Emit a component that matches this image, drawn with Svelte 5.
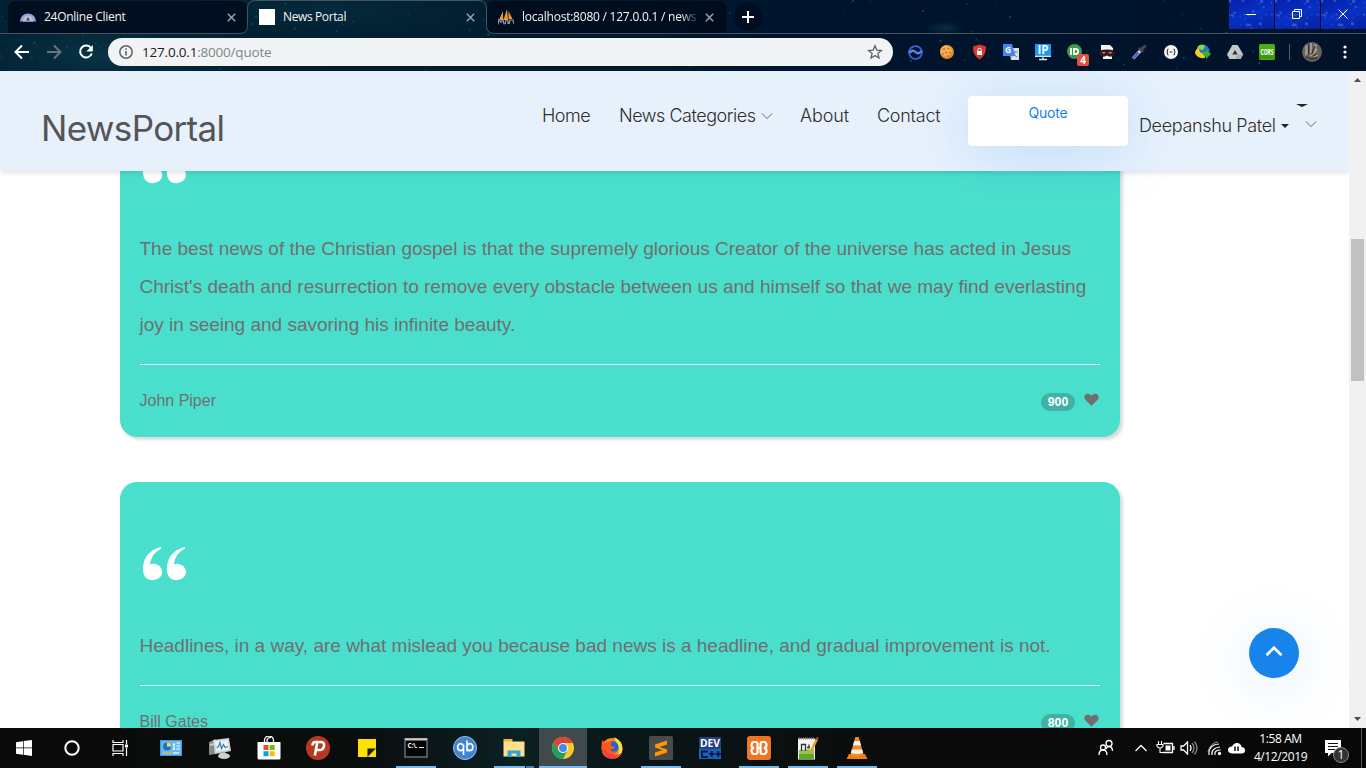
<script>
  const quotes = [
    {
      lines: [
        'The best news of the Christian gospel is that the supremely glorious Creator of the universe has acted in Jesus',
        "Christ's death and resurrection to remove every obstacle between us and himself so that we may find everlasting",
        'joy in seeing and savoring his infinite beauty.'
      ],
      author: 'John Piper',
      likes: 900
    },
    {
      lines: ['Headlines, in a way, are what mislead you because bad news is a headline, and gradual improvement is not.'],
      author: 'Bill Gates',
      likes: 800
    }
  ];
  const extensions = ['wave', 'cookie', 'shield', 'translate', 'ip', 'pushbullet', 'mask', 'dropper', 'json', 'idm', 'drive', 'cors'];
  const apps = [
    ['control'], ['monitor'], ['store'], ['psiphon'], ['sticky'], ['cmd', 'run'], ['qb'], ['explorer', 'multi'],
    ['chrome', 'active'], ['firefox'], ['sublime', 'run'], ['dev'], ['xampp', 'run'], ['notepad', 'run'], ['vlc', 'run']
  ];
  const quoteMark = 'M17.500 0L18.400 1.500Q8.500 6 7 17.300A9.300 8.200 0 1110 33.300Q0 33 0 21.500 .5 5 17.500 0z';
  let seed = 7;
  const rnd = () => (seed = (seed * 16807) % 2147483647) / 2147483647;
  const stars = Array.from({ length: 170 }, () => {
    const x = rnd();
    return { x: (rnd() > 0.5 ? x * 1366 : x * x * 500).toFixed(1), y: (rnd() * 71).toFixed(1), r: (0.4 + rnd() * 0.8).toFixed(2), o: (0.06 + rnd() * 0.2).toFixed(2) };
  });
  const sparks = Array.from({ length: 60 }, () => ({ x: (rnd() * 137).toFixed(1), y: (rnd() * 29).toFixed(1), r: (0.5 + rnd() * 1.3).toFixed(2), o: (0.12 + rnd() * 0.35).toFixed(2) }));
</script>

{#snippet cross()}
  <svg class="cross" width="9" height="9" viewBox="0 0 9 9"><path d="M.8.8l7.4 7.4M8.2.8L.8 8.2" stroke="#9aa3ad" stroke-width="1.500" fill="none" /></svg>
{/snippet}

{#snippet extIcon(name)}
  <svg width="18" height="18" viewBox="0 0 18 18">
    {#if name === 'wave'}
      <circle cx="9.500" cy="9.500" r="6.400" fill="none" stroke="#3c63d0" stroke-width="1.800" />
      <path d="M3.500 10q3-4 6-1t6-1" fill="none" stroke="#5c82e8" stroke-width="2.400" />
    {:else if name === 'cookie'}
      <circle cx="9" cy="9" r="7" fill="#e0892c" />
      <circle cx="8" cy="8" r="5.800" fill="#f3ad55" />
      <g fill="#9a5720"><circle cx="6" cy="6" r=".8" /><circle cx="10.500" cy="5.500" r=".8" /><circle cx="8" cy="9.500" r=".8" /><circle cx="12" cy="9.500" r=".8" /><circle cx="5" cy="11" r=".8" /><circle cx="10" cy="13" r=".8" /></g>
    {:else if name === 'shield'}
      <path d="M9.500 1.500l6.500 2q.3 9-6.500 13Q2.700 12.500 3 3.500z" fill="#d9382c" />
      <rect x="7" y="8" width="5" height="4" fill="#fff" /><path d="M7.900 8V6.700a1.600 1.600 0 013.200 0V8" fill="none" stroke="#fff" />
    {:else if name === 'translate'}
      <path d="M7 5h10v12H9z" fill="#dcdfe2" /><path d="M10 9h6M13 8v1q-.5 3-3.500 5M11 10q1 3 4.500 4" stroke="#7b8794" fill="none" />
      <path d="M1 1h9l3.500 12H1z" fill="#4285f4" /><text x="3" y="10" font-size="8.500" font-weight="700" fill="#fff">G</text>
    {:else if name === 'ip'}
      <rect x="1" y="1" width="16" height="12" fill="#1b98ef" /><path d="M1 13.400h16M9 13.500v3M5 16.500h8" stroke="#d5e6f2" stroke-width="1.300" />
      <text x="3.500" y="11" font-size="11.500" font-weight="700" fill="#fff" textLength="11">IP</text>
    {:else if name === 'pushbullet'}
      <circle cx="8.500" cy="8.500" r="7.500" fill="#3e9b4c" /><path d="M5 5v7M8 5.800v5.400h1.500a2.700 2.700 0 000-5.400z" stroke="#fff" stroke-width="1.800" fill="none" />
    {:else if name === 'mask'}
      <path d="M4 2h8l3 3v5H3V2zM5 12h9v4H5z" fill="#f4f4f4" /><path d="M1.500 7.500Q9 5.500 16.500 7.500V12q-4 3-7.500.500Q5.500 15 1.500 12z" fill="#35191b" />
      <ellipse cx="5.800" cy="9.800" rx="1.800" ry=".8" fill="#c09a92" /><ellipse cx="12.200" cy="9.800" rx="1.800" ry=".8" fill="#c09a92" />
    {:else if name === 'dropper'}
      <path d="M3 15.500l8.500-9" stroke="#c8d6e8" stroke-width="3.200" /><path d="M3 15.500l5.500-6" stroke="#3460c8" stroke-width="2" /><path d="M9 5l4 4M11 7l4.500-4.500" stroke="#4a464c" stroke-width="3" />
    {:else if name === 'json'}
      <circle cx="9" cy="9" r="7" fill="#f5f5f5" /><path d="M6.500 6Q5.500 6 5.500 7.500T4.500 9q1 0 1 1.500t1 1.500M11.500 6q1 0 1 1.500t1 1.500q-1 0-1 1.500t-1 1.500M7.500 9h3" stroke="#333" stroke-width="1.100" fill="none" />
    {:else if name === 'idm'}
      <circle cx="9" cy="8" r="6.500" fill="#2476c9" /><path d="M4 3q4-3 7 0l-2 4-6-1z" fill="#8fd34c" /><path d="M1 10q1-5 4-4 0 4 5 5l1 4Q3 16 1 10z" fill="#f6cd20" /><path d="M8 9h4V6.500l5 4.500-5 5v-3q-3 0-4-4z" fill="#37b32a" />
    {:else if name === 'drive'}
      <path d="M6.300 2h5.400l5.500 9.500-2.700 4.500h-11L1 11.500z" fill="#c5c7c9" /><path d="M9 7l2.700 4.500H6.300z" fill="#26323d" /><path d="M12 11.500h5l-2.500 4.500h-5z" fill="#a9abae" />
    {:else if name === 'cors'}
      <rect x="1" y="1" width="16" height="16" rx="1.500" fill="#4cae17" /><path d="M1 10h16v6H1z" fill="#3d980f" />
      <text x="2.500" y="12" font-size="8" font-weight="700" fill="#fff" textLength="13" lengthAdjust="spacingAndGlyphs">CORS</text>
    {/if}
  </svg>
{/snippet}

{#snippet appIcon(name)}
  <svg width="24" height="24" viewBox="0 0 24 24">
    {#if name === 'control'}
      <rect x="1.500" y="4.500" width="21" height="15" rx=".5" fill="#65b9ee" /><rect x="1.500" y="4.500" width="21" height="15" fill="none" stroke="#3c9ade" />
      <circle cx="8" cy="10.500" r="4" fill="#1874c7" /><path d="M8 10.500V6.500a4 4 0 014 4z" fill="#ffd93f" /><path d="M14 8.500h2M14 13h2M17.500 7h3.500M17.500 10h3.500M17.500 13h3.500M15 7v7" stroke="#fff" stroke-width="1.100" />
      <path d="M4 17h8" stroke="#ffaa2b" stroke-width="1.500" /><path d="M14 17h6" stroke="#d9f0ff" stroke-width="1.500" />
    {:else if name === 'monitor'}
      <path d="M1 6l7-3v15l-7 1z" fill="#858c88" /><path d="M2 8l4-1v2l-4 1z" fill="#c9cec9" /><path d="M5 4l16-2 2 13-16 3z" fill="#d3d6d4" /><path d="M7 5.500l12.500-1.500 1.500 9.500-12.500 2z" fill="#eaf3f7" /><path d="M8.500 11.500l2-1 1.500-4 1.500 6 2-4 1.500 3 3-1" fill="none" stroke="#2a83b8" stroke-width="1.200" /><path d="M11 16.500l6-1 1 4h-6z" fill="#abb0ae" /><ellipse cx="16" cy="20" rx="6" ry="3" fill="#cdd0ce" />
    {:else if name === 'store'}
      <path d="M.5 6h23v16q0 1.500-1.500 1.500H2Q.5 23.500.5 22z" fill="#fff" /><path d="M7.500 6V4.500a4.500 4.500 0 019 0V6M10 6V4q1.500-3 4-2.500" fill="none" stroke="#fff" stroke-width="1.300" />
      <path d="M6.500 9h5v5h-5z" fill="#e84e25" /><path d="M12.700 9h5v5h-5z" fill="#7cb800" /><path d="M6.500 15.200h5v5h-5z" fill="#00a2e8" /><path d="M12.700 15.200h5v5h-5z" fill="#fdb813" />
    {:else if name === 'psiphon'}
      <circle cx="12" cy="12" r="12" fill="#b73a20" /><path d="M6.500 9.500Q6.500 6 9.500 6h5q4 0 3.500 3.800-.6 4.200-4.500 4.200H9.700M11.300 6.500L8.800 19.500" fill="none" stroke="#fff" stroke-width="2.600" />
    {:else if name === 'sticky'}
      <path d="M3 3h18v9.500L12.500 21H3z" fill="#ffe100" /><path d="M12.500 12.500H21L12.500 21z" fill="#1b1b12" /><path d="M12.500 21L21 12.500V21z" fill="#ffe100" />
    {:else if name === 'cmd'}
      <rect x="1" y="2.500" width="22" height="18.500" fill="#050505" stroke="#9a9d9e" /><path d="M1 3.500h22" stroke="#c7cacb" stroke-width="2" /><text x="3.500" y="11.500" font-size="6.500" font-weight="700" fill="#fff" textLength="10">C:\.</text><path d="M15 11.500h5" stroke="#fff" />
    {:else if name === 'qb'}
      <circle cx="12" cy="12" r="11.500" fill="#4285cf" stroke="#96c1ef" /><path d="M10.500 8.500v10.500M10.500 12a3 3.500 0 10-5.800 0a3 3.500 0 005.800 0M14 4.500v11M14 12a3 3.500 0 115.800 0a3 3.500 0 01-5.800 0" fill="none" stroke="#fff" stroke-width="1.600" />
    {:else if name === 'explorer'}
      <path d="M1.500 3h9v3h-9z" fill="#f2b51e" /><path d="M1.500 5.500h21v15h-21z" fill="#ffe08c" /><path d="M5.500 21v-6.500h13V21h-4v-3.500h-5V21z" fill="#2ba8e0" />
    {:else if name === 'chrome'}
      <circle cx="12" cy="12" r="11" fill="#fbc92b" /><path d="M12 12V7h9.800Q19.500 1 12 1A11 11 0 002.470 6.500L7.700 14.500z" fill="#da4336" /><path d="M2.470 6.500A11 11 0 0012 23L16.300 14.500Q12 19 7.700 14.500z" fill="#1fa15d" />
      <circle cx="12" cy="12" r="5" fill="#fff" /><circle cx="12" cy="12" r="4" fill="#4688f1" />
    {:else if name === 'firefox'}
      <circle cx="12" cy="12.500" r="10.500" fill="#ff8a16" /><path d="M14 1q9 4 8.500 12-.5 7-7 9.500Q21 15 18 10q-2-4-4-9z" fill="#ffdf3c" /><circle cx="12.500" cy="11" r="6" fill="#2065d4" /><path d="M2 4l3 3q4-3 7-1-2 2-1 4l4 1q-2 3-5 2.500 2 3.500 7 1.500-3 6-9 4.500Q1 17 1.500 10z" fill="#ff5a1f" /><path d="M1.500 12Q3 22 12 23q7-.5 9.500-6-9 5-16-3z" fill="#f2403d" />
    {:else if name === 'sublime'}
      <rect width="24" height="24" rx="1.500" fill="#494a4b" /><path d="M18 4.500v4L10.500 11 18 13.500v3L6 20.500v-4l7.500-2.500L6 11.500v-3z" fill="#ff9800" />
    {:else if name === 'dev'}
      <path d="M1 1h22v22H1z" fill="#24407f" /><path d="M1 13h22v10H1z" fill="#1a62b8" /><text x="2" y="11" font-size="11" font-weight="700" fill="#fff" textLength="20" lengthAdjust="spacingAndGlyphs">DEV</text><path d="M10 15.500H4v5.500h6M11 18h5.500M13.700 15.300v5.500M17.500 18H23M20.200 15.300v5.500" fill="none" stroke="#071a4b" stroke-width="2" />
    {:else if name === 'xampp'}
      <rect width="24" height="24" rx="3" fill="#ef7522" /><path d="M7.300 6H8.500Q10.500 6 10.500 8v8q0 2-2 2H7.300q-2.800 0-2.800-3T7.300 12q-2.800 0-2.800-3t2.800-3zM16.700 6H15.500Q13.500 6 13.500 8v8q0 2 2 2h1.200q2.800 0 2.800-3t-2.800-3q2.800 0 2.800-3t-2.800-3zM10.500 12h3" fill="none" stroke="#fff" stroke-width="2.200" />
    {:else if name === 'notepad'}
      <path d="M2 2.500h17v21H2z" fill="#f4f5f0" /><path d="M3 14l15-1v10H3z" fill="#8ec64c" /><path d="M3 18h15v5H3z" fill="#5fa928" /><path d="M3 2.500h16" stroke="#8a8a8a" stroke-width="2" stroke-dasharray="1 1" /><path d="M5.500 15V8.500h4V15M11 11.500h3M13 8.500v4" stroke="#333" stroke-width="1.300" fill="none" /><path d="M14 17l7-14" stroke="#e7a625" stroke-width="2.500" /><path d="M20.500 4l1.200-2.500" stroke="#b74532" stroke-width="2.500" />
    {:else if name === 'vlc'}
      <path d="M4 18h16l2.500 5h-21z" fill="#f47b0c" /><path d="M10.300 1h3.400l5 18q-6.700 3-13.400 0z" fill="#f58b20" /><path d="M9.200 5h5.600l1.300 4.500H7.900zM6.800 13.500h10.400l1 3.500q-6.200 2-12.400 0z" fill="#eef1f2" />
    {/if}
  </svg>
{/snippet}

<div class="screen">
  <div class="browser">
    <svg class="sky" width="1366" height="71" viewBox="0 0 1366 71">
      <defs>
        <radialGradient id="neb"><stop offset="0" stop-color="#0b3c4e" stop-opacity=".7" /><stop offset="1" stop-color="#082b40" stop-opacity="0" /></radialGradient>
      </defs>
      <ellipse cx="100" cy="55" rx="180" ry="50" fill="url(#neb)" /><ellipse cx="330" cy="10" rx="240" ry="45" fill="url(#neb)" opacity=".6" /><ellipse cx="945" cy="28" rx="22" ry="8" fill="url(#neb)" />
      {#each stars as s}<circle cx={s.x} cy={s.y} r={s.r} fill="#7fc3d8" opacity={s.o} />{/each}
      <path d="M8 33V8Q8 1 16 1H239Q247 1 247 8V26Q247 33 240 33zM487 8Q487 1 495 1H718Q726 1 726 9V33H494Q487 33 487 26z" fill="#000b1d" opacity=".88" />
      <path d="M0 33.500H239.500Q247.500 33.500 247.500 25.500V8.500Q247.500 .500 255.500 .500H478.500Q486.500 .500 486.500 8.500V25.500Q486.500 33.500 494.500 33.500H1366" fill="none" stroke="#46545f" />
    </svg>
    <div class="tabs">
      <div class="tab">
        <svg width="16" height="16" viewBox="0 0 16 16"><path d="M0 12.500A8 8 0 0116 12.500z" fill="#93a5d4" /><path d="M3 12.500q0-6 5-6t5 6" fill="#b3bfdf" /><path d="M6 11.500L8 8l2 3.500z" fill="#37476f" /></svg>
        <span class="title t1">24Online Client</span>{@render cross()}
      </div>
      <div class="tab">
        <i class="blank"></i><span class="title t2">News Portal</span>{@render cross()}
      </div>
      <div class="tab">
        <svg width="16" height="16" viewBox="0 0 16 16"><path d="M1 11L5 2v9zM5.500 11L9 0l1 11zM10.500 10V2l4 8z" fill="#f39a25" /><path d="M0 15.500l1-5 2 3 2-3 1 5M7 15l1-4h2v4M11 15l1-4h3l1 4" fill="none" stroke="#9197b9" stroke-width="1.200" /></svg>
        <span class="title t3">localhost:8080 / 127.0.0.1 / newsp</span>{@render cross()}
      </div>
      <div class="plus"><svg width="12" height="12" viewBox="0 0 12 12"><path d="M6 0v12M0 6h12" stroke="#fff" stroke-width="2" /></svg></div>
      <div class="controls">
        {#each ['M0 5.500h10', 'M.5 2.500h7v7h-7zM2.500 2.500v-2h7v7h-2', 'M.5.500l9 9M9.500.500l-9 9'] as d}
          <div class="ctl">
            <svg class="dots" width="45" height="29" viewBox="0 0 45 29">{#each sparks.slice(0, 34) as p}<circle cx={p.x % 45} cy={p.y} r={p.r} fill="#6f9dff" opacity={p.o} />{/each}</svg>
            <svg width="10" height="10" viewBox="0 0 10 10"><path {d} stroke="#fff" fill="none" /></svg>
          </div>
        {/each}
      </div>
    </div>
    <div class="toolbar">
      <svg class="nav-icons" width="108" height="36" viewBox="0 0 108 36">
        <path d="M29 18H16M22 11.500L15.500 18l6.500 6.500" fill="none" stroke="#fff" stroke-width="2" />
        <path d="M47 18h13M54 11.500l6.500 6.500-6.500 6.500" fill="none" stroke="#66747f" stroke-width="2" />
        <path d="M91 14a6 6 0 10.800 5.500" fill="none" stroke="#fff" stroke-width="2" /><path d="M92.800 11v6.500h-6.500z" fill="#fff" />
      </svg>
      <div class="omnibox">
        <svg width="14" height="14" viewBox="0 0 14 14"><circle cx="7" cy="7" r="6.200" fill="none" stroke="#5f6368" stroke-width="1.500" /><path d="M7 6v4.500M7 3.300v1.500" stroke="#5f6368" stroke-width="1.600" /></svg>
        <span class="url"><b>127.0.0.1</b>:8000/quote</span>
        <svg width="16" height="16" viewBox="0 0 16 16"><path d="M8 1.800l1.800 4.300 4.600.4-3.500 3 1.100 4.500L8 11.600 4 14l1.100-4.500-3.500-3 4.600-.4z" fill="none" stroke="#5f6368" stroke-width="1.300" /></svg>
      </div>
      <div class="exts">
        {#each extensions as e}
          <div class="ext">{@render extIcon(e)}{#if e === 'pushbullet'}<span class="count">4</span>{/if}</div>
        {/each}
      </div>
      <i class="sep"></i>
      <svg class="avatar" width="20" height="20" viewBox="0 0 20 20"><circle cx="10" cy="10" r="10" fill="#66615b" /><path d="M3 4l3-2v10l-3 2zM8 1h2v9l-2 2zM12 2l3 1-1 6-3 3z" fill="#9d968e" /><path d="M13 4l-3 8 5 2M4 15l5 2 6-1M6.500 2v10" stroke="#35312e" fill="none" stroke-width="1.300" /><path d="M8 14q5-2 7-7M12 15l4-2" stroke="#c0b9ad" fill="none" /></svg>
      <svg width="4" height="16" viewBox="0 0 4 16"><circle cx="2" cy="3" r="1.600" fill="#fff" /><circle cx="2" cy="8" r="1.600" fill="#fff" /><circle cx="2" cy="13" r="1.600" fill="#fff" /></svg>
    </div>
  </div>

  <div class="viewport">
    <div class="page">
      <header>
        <div class="brand">NewsPortal</div>
        <nav>
          <span class="home">Home</span>
          <span class="cats"><span>News Categories</span><svg width="12" height="8" viewBox="0 0 12 8"><path d="M1 1.500l5 5 5-5" fill="none" stroke="#555" stroke-width=".9" /></svg></span>
          <span class="about">About</span>
          <span class="contact">Contact</span>
          <div class="quote-btn">Quote</div>
          <span class="user"><span>Deepanshu Patel</span><i class="caret"></i></span>
          <div class="more"><i></i><svg width="12" height="8" viewBox="0 0 12 8"><path d="M1 1.500l5 5 5-5" fill="none" stroke="#555" stroke-width=".9" /></svg></div>
        </nav>
      </header>
      <main>
        {#each quotes as q}
          <article>
            <svg class="mark" width="44" height="34" viewBox="0 0 44 34"><path d={quoteMark} fill="#fff" /><path transform="translate(23.800)" d={quoteMark} fill="#fff" /></svg>
            <div class="text">{#each q.lines as line}<div>{line}</div>{/each}</div>
            <footer>
              <span class="author">{q.author}</span>
              <span class="badge">{q.likes}</span>
              <svg class="heart" width="15" height="13" viewBox="0 0 15 13"><path d="M7.500 12.700L1.200 6.600C-1.500 3 2.500-2 7.500 2.300 12.500-2 16.500 3 13.800 6.600z" fill="#6f6f6f" /></svg>
            </footer>
          </article>
        {/each}
      </main>
      <div class="top-btn"><svg width="18" height="11" viewBox="0 0 18 11"><path d="M1.500 9.200L9 1.700l7.500 7.500" fill="none" stroke="#fff" stroke-width="2.700" /></svg></div>
    </div>
    <div class="scrollbar">
      <svg width="7" height="4" viewBox="0 0 7 4"><path d="M0 4L3.500 0 7 4z" fill="#505050" /></svg>
      <i class="thumb"></i>
      <svg class="down" width="7" height="4" viewBox="0 0 7 4"><path d="M0 0h7L3.500 4z" fill="#505050" /></svg>
    </div>
  </div>

  <div class="taskbar">
    <div class="sys"><svg width="16" height="16" viewBox="0 0 16 16"><path d="M0 2.200l7-1V7.500H0zM7.700 1.100L16 0v7.500H7.700zM0 8.300h7v6.500l-7-1zM7.700 8.300H16V16l-8.300-1.200z" fill="#fff" /></svg></div>
    <div class="sys"><svg width="16" height="16" viewBox="0 0 16 16"><circle cx="8" cy="8" r="6.700" fill="none" stroke="#fff" stroke-width="2" /></svg></div>
    <div class="sys"><svg width="17" height="16" viewBox="0 0 17 16"><path d="M1 0v2.500h10V0M1 16v-2.500h10V16M1 4.500h10v6.500H1zM14.500 0v4M14.500 8v8" fill="none" stroke="#fff" stroke-width="1.200" /><path d="M13 4.500h3v3h-3z" fill="#fff" /></svg></div>
    <div class="apps">
      {#each apps as [name, state]}<div class="app {state ?? ''}">{@render appIcon(name)}</div>{/each}
    </div>
    <div class="tray">
      <svg width="180" height="40" viewBox="-21 0 180 40" fill="none" stroke="#fff" stroke-width="1.300">
        <circle cx="23" cy="15.500" r="3" /><path d="M20 21q1-2.500 3-2.500 3.500 0 3.500 4.500" /><circle cx="17" cy="19.500" r="2.500" /><path d="M13 27q0-5 4-5t4 5" />
        <path d="M49.500 23l5.500-5.500L60.500 23" />
        <path d="M77.500 15.500h9v9h-10M88 18v4" /><path d="M79.500 17.500h5v5h-5z" fill="#fff" stroke="none" /><path d="M72.500 13v3M75.500 13v3M71 16.500h6v1.500q-1 2-3 2t-3-2zM74 20v4.500h3" stroke-width="1.100" />
        <path d="M95 18h2.500l4-4v12l-4-4H95z" /><path d="M104 17q2 3 0 6" /><path d="M106 15q4 5 0 10M108.500 13.500q5 6.500 0 13" stroke="#878787" />
        <path d="M123 27q-1-10 10-11M126 27q-1-7 8-8M129 27q-1-5 5.500-5" stroke-width="1.200" /><path d="M122 24q2-9 10-10" stroke="#999" stroke-width="1" /><circle cx="133.500" cy="25.500" r="1.700" fill="#fff" stroke="none" />
        <path d="M146 25.500q-4-.5-4-3.500 0-3.500 4-3.500 2-4 5.500-3.500 3.500.5 4 4 3.500 0 3.500 3.500 0 3-3.500 3z" fill="#fff" stroke="none" /><path d="M149 18.500v4.500M152 18.500v4.500" stroke="#111" stroke-width="1.500" />
      </svg>
      <div class="clock"><span>1:58 AM</span><span>4/12/2019</span></div>
      <div class="action">
        <svg width="16" height="17" viewBox="0 0 16 17"><path d="M0 0h16v13H6.500L3 16.500V13H0z" fill="#fff" /><path d="M3 3.500h10M3 6.500h10M3 9.500h7" stroke="#111" stroke-width="1.200" /></svg>
        <span class="one">1</span>
      </div>
      <i class="peek"></i>
    </div>
  </div>
</div>

<style>
  :global(body) { margin: 0; overflow: hidden; }
  .screen { width: 1366px; height: 768px; display: flex; flex-direction: column; overflow: hidden; font-family: 'Open Sans', sans-serif; }
  svg { display: block; flex: none; }
  i { display: block; }

  .browser { position: relative; height: 71px; flex: none; background: linear-gradient(90deg, #002131 0, #001a2c 45%, #00142d 60%, #001329 100%); }
  .sky { position: absolute; inset: 0; }
  .tabs { position: relative; height: 34px; display: flex; padding-left: 8px; }
  .tab { width: 239px; box-sizing: border-box; padding: 0 11px 0 12px; display: flex; align-items: center; color: #f2f5f7; font-size: 12px; }
  .tab .title { flex: 1; margin-left: 8px; white-space: nowrap; overflow: hidden; line-height: 20px; }
  .t1 { letter-spacing: -.27px; }
  .t2 { letter-spacing: -.38px; }
  .tab .t3 { letter-spacing: -.23px; margin-right: 8px; -webkit-mask-image: linear-gradient(90deg, #000 158px, transparent 178px); mask-image: linear-gradient(90deg, #000 158px, transparent 178px); }
  .blank { width: 16px; height: 16px; background: #fff; }
  .plus { width: 28px; height: 28px; margin: 3px 0 0 9px; border-radius: 50%; background: #000d20; display: grid; place-items: center; }
  .controls { margin-left: auto; display: flex; gap: 1px; height: 29px; }
  .ctl { position: relative; width: 45px; box-sizing: border-box; padding: 0 2px 1px 0; display: grid; place-items: center; background: linear-gradient(160deg, #0620a8, #0730c4 50%, #0521a0); overflow: hidden; }
  .ctl .dots { position: absolute; inset: 0; }
  .ctl svg:last-child { position: relative; }
  .toolbar { position: relative; height: 36px; display: flex; align-items: center; }
  .omnibox { width: 785px; height: 28px; box-sizing: border-box; border-radius: 14px; background: #f1f3f4; padding: 0 10px 0 11px; display: flex; align-items: center; }
  .url { flex: 1; margin-left: 9px; font-size: 13.500px; line-height: 20px; letter-spacing: -.2px; color: #80868b; }
  .url b { font-weight: 400; color: #202124; }
  .exts { display: flex; margin-left: 6px; }
  .ext { width: 32px; height: 18px; display: grid; place-items: center; position: relative; }
  .ext text, .app text { font-family: 'Open Sans', sans-serif; }
  .count { position: absolute; right: 2px; top: 11px; width: 12px; height: 12px; border-radius: 2px; background: #e2503f; color: #fff; font: 700 10px/12px 'Open Sans', sans-serif; text-align: center; }
  .sep { width: 1px; height: 16px; background: #52606c; margin: 0 12px 0 6px; }
  .avatar { margin-right: 21px; }

  .viewport { height: 657px; flex: none; display: flex; background: #fff; overflow: hidden; }
  .page { position: relative; width: 1349px; overflow: hidden; }
  header { position: relative; z-index: 2; height: 100px; display: flex; background: #e7f1fc; border-radius: 0 0 4px 4px; box-shadow: 0 2px 5px rgba(0, 0, 0, .12); font-family: Inter, sans-serif; font-weight: 300; color: #2e2e2e; }
  .brand { width: 501px; padding-left: 41px; font-size: 35px; line-height: 44px; padding-top: 35px; letter-spacing: -.65px; color: #555; font-weight: 400; }
  nav { display: grid; grid-template-columns: 77px 181px 77px 91px 160px 11px 156px 30px; align-items: start; padding-top: 25px; font-size: 18px; line-height: 24px; letter-spacing: -.35px; white-space: nowrap; }
  nav > span { padding-top: 8px; }
  .cats { display: flex; align-items: center; gap: 5px; }
  .cats span { letter-spacing: -.47px; }
  .home { letter-spacing: -.5px; }
  .about { letter-spacing: -.15px; }
  .contact { letter-spacing: -.25px; }
  .quote-btn { width: 160px; height: 50px; box-sizing: border-box; padding-top: 5px; border-radius: 4px; background: #fff; color: #1583e9; font-size: 14px; letter-spacing: -.2px; text-align: center; font-weight: 400; box-shadow: 0 8px 60px rgba(24, 140, 236, .2); }
  nav .user { grid-column: 7; display: flex; align-items: center; gap: 5px; padding-top: 18px; }
  .caret { border: 4px solid transparent; border-top-color: #222; border-bottom: 0; }
  .more { padding-top: 8px; }
  .more i { width: 0; border: 6px solid transparent; border-top: 3px solid #222; border-bottom: 0; margin-left: 1px; }
  .more svg { margin: 13px 0 0 10px; }

  main { margin: -86px 0 0 120px; display: flex; flex-direction: column; gap: 45px; font-family: 'Liberation Sans', Arial, sans-serif; color: #6f6f6f; }
  article { width: 1000px; box-sizing: border-box; padding: 65px 20px 0 19.500px; border-radius: 17px; background: #4adfcd; box-shadow: 3px 3px 3px rgba(0, 0, 0, .14); }
  .mark { margin: 0 0 46px 3.500px; }
  .text { padding-bottom: 20px; font-size: 19px; line-height: 38px; white-space: nowrap; }
  footer { height: 72px; border-top: 1px solid #e9fbf8; display: flex; align-items: center; font-size: 16px; }
  .author { flex: 1; }
  .badge { width: 34px; height: 18px; margin: 1px 9px 0 0; border-radius: 9px; background: #3eb3a5; color: #fff; font-size: 12.300px; line-height: 18px; font-weight: 700; text-align: center; }
  .heart { margin: 0 1px 3px 0; }
  .top-btn { position: absolute; right: 50px; bottom: 50px; width: 50px; height: 50px; border-radius: 50%; background: #1784eb; display: grid; place-items: center; box-shadow: 0 8px 60px rgba(24, 131, 236, .17); }
  .top-btn svg { margin-bottom: 3px; }
  .scrollbar { width: 17px; background: #f1f1f1; display: flex; flex-direction: column; align-items: center; padding: 7px 0; box-sizing: border-box; }
  .thumb { width: 13px; height: 142px; margin-top: 157px; background: #c1c1c1; }
  .down { margin-top: auto; }

  .taskbar { height: 40px; flex: none; display: flex; background: linear-gradient(90deg, #0a0a0a 0, #0a0c0c 25%, #0c2024 38%, #0a1719 45%, #0b0b0b 65%, #080808 100%); color: #fff; }
  .sys { width: 48px; display: grid; place-items: center; }
  .apps { display: flex; gap: 1px; margin-left: 3px; }
  .app { width: 48px; display: grid; place-items: center; box-sizing: border-box; }
  .run { background: linear-gradient(#76b9ed, #76b9ed) center bottom / 40px 2px no-repeat; }
  .multi { background: linear-gradient(90deg, #76b9ed 31px, #0b1415 31px 32px, #4f7da1 32px) center bottom / 40px 2px no-repeat; }
  .active { background: linear-gradient(#76b9ed, #76b9ed) center bottom / 48px 2px no-repeat #40494b; }
  .tray { margin-left: auto; display: flex; }
  .clock { width: 72px; box-sizing: border-box; display: flex; flex-direction: column; align-items: center; font-size: 12px; line-height: 18px; padding: 2px 0 0 3px; margin-left: -2px; letter-spacing: -.4px; }
  .action { position: relative; width: 46px; box-sizing: border-box; padding: 12px 0 0 10px; }
  .one { position: absolute; left: 18px; top: 19px; width: 14px; height: 14px; border: 1px solid #8b8b8b; border-radius: 50%; background: #333; font-size: 12px; line-height: 14px; text-align: center; }
  .peek { width: 1px; margin: 0 4px 0 0; background: #555; }
</style>
